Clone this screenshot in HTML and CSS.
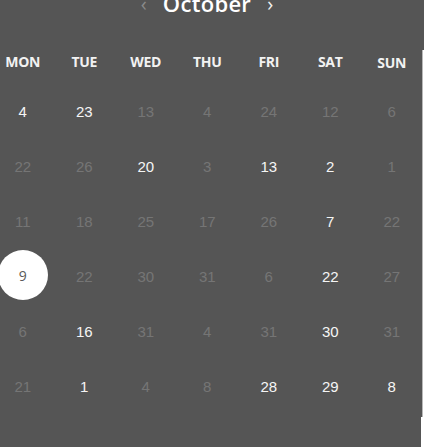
FILE: index.html
```html
<!DOCTYPE html>
<html lang="en">

<head>
    <meta charset="UTF-8">
    <meta name="viewport" content="width=device-width, initial-scale=1.0">
    <title>Calendar</title>
    <link rel="stylesheet" href="styles.css">
</head>

<body>
    <div class="calendar">
        <!-- month header -->
        <div class="top">
            <div class="title">
                <span class="arrow prev">&#8249;</span>
                <span class="month">October</span>
                <span class="arrow next">&#8250;</span>
            </div>
        </div>
        <!-- days -->
        <div class="grid">
            <div class="row head">
                <div class="col">MON</div>
                <div class="col">TUE</div>
                <div class="col">WED</div>
                <div class="col">THU</div>
                <div class="col">FRI</div>
                <div class="col">SAT</div>
                <div class="col sun">SUN</div>
            </div>
            <div class="days">
                <div class="row">
                    <div class="col on">4</div>
                    <div class="col on">23</div>
                    <div class="col">13</div>
                    <div class="col">4</div>
                    <div class="col">24</div>
                    <div class="col">12</div>
                    <div class="col">6</div>
                </div>
                <div class="row">
                    <div class="col">22</div>
                    <div class="col">26</div>
                    <div class="col on">20</div>
                    <div class="col">3</div>
                    <div class="col on">13</div>
                    <div class="col on">2</div>
                    <div class="col">1</div>
                </div>
                <div class="row">
                    <div class="col">11</div>
                    <div class="col">18</div>
                    <div class="col">25</div>
                    <div class="col">17</div>
                    <div class="col">26</div>
                    <div class="col on">7</div>
                    <div class="col">22</div>
                </div>
                <div class="row">
                    <div class="col"><span class="today">9</span></div>
                    <div class="col">22</div>
                    <div class="col">30</div>
                    <div class="col">31</div>
                    <div class="col">6</div>
                    <div class="col on">22</div>
                    <div class="col">27</div>
                </div>
                <div class="row">
                    <div class="col">6</div>
                    <div class="col on">16</div>
                    <div class="col">31</div>
                    <div class="col">4</div>
                    <div class="col">31</div>
                    <div class="col on">30</div>
                    <div class="col">31</div>
                </div>
                <div class="row">
                    <div class="col">21</div>
                    <div class="col on">1</div>
                    <div class="col">4</div>
                    <div class="col">8</div>
                    <div class="col on">28</div>
                    <div class="col on">29</div>
                    <div class="col on">8</div>
                </div>
            </div>
        </div>
        <div class="bottom"></div>
    </div>
</body>

</html>
```

FILE: styles.css
```css
* {
    margin: 0;
    padding: 0;
    box-sizing: border-box;
}

body {
    background-color: #ffffff;
    font-family: "Liberation Sans", Arial, sans-serif;
    overflow: hidden;
}

.calendar {
    margin-left: -8px;
}

.top {
    display: flow-root;
    width: 432px;
    height: 50px;
    background-color: #555555;
}

.title {
    display: flex;
    justify-content: center;
    align-items: center;
    gap: 16px;
    height: 24px;
    margin-top: -9px;
    width: 430px;
    font-family: "Open Sans", sans-serif;
}

.month {
    font-size: 22px;
    font-weight: 600;
    color: #ffffff;
    letter-spacing: 0.3px;
}

.arrow {
    font-size: 20px;
    color: #f0f0f0;
}

.arrow.prev {
    color: #8a8a8a;
}

.grid {
    width: 431px;
    height: 367px;
    background-color: #555555;
    border-right: 1px solid #b8b8b8;
}

.row {
    display: grid;
    grid-template-columns: repeat(7, 61.5px);
    height: 55px;
    align-items: center;
}

.row.head {
    height: 22px;
    font-family: "Open Sans", sans-serif;
    font-weight: 700;
    letter-spacing: -0.3px;
}

.days {
    padding-top: 12px;
}

.col {
    display: flex;
    justify-content: center;
    align-items: center;
    font-size: 15px;
    color: #757575;
}

.row.head .col {
    font-size: 14px;
    color: #f2f2f2;
}

.row.head .sun {
    padding-top: 3px;
}

.col.on {
    color: #f5f5f5;
}

.today {
    display: flex;
    justify-content: center;
    align-items: center;
    width: 50px;
    height: 50px;
    margin-top: -3px;
    border-radius: 50%;
    background-color: #ffffff;
    color: #5a5a5a;
    font-family: "Open Sans", sans-serif;
    font-size: 14px;
}

.bottom {
    width: 429px;
    height: 40px;
    background-color: #555555;
}
```
